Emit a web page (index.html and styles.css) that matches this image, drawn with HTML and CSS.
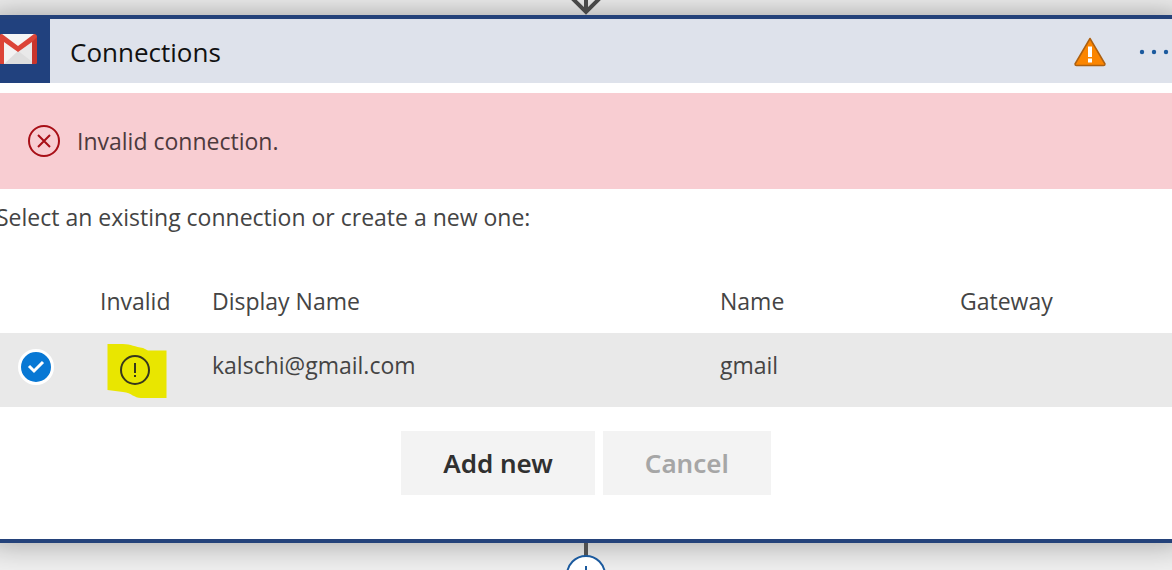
FILE: index.html
```html
<!DOCTYPE html>
<html lang="en">
<head>
<meta charset="utf-8">
<title>Connections</title>
<link rel="stylesheet" href="styles.css">
</head>
<body>
<main class="designer">
  <div class="connector-in">
    <svg width="32" height="15" viewBox="0 0 32 15" aria-hidden="true"><path d="M16 0v11M1-3l15 15L31-3" fill="none" stroke="#484848" stroke-width="4"/></svg>
  </div>
  <section class="card">
    <header class="card-header">
      <div class="logo-tile">
        <svg width="40" height="32" viewBox="0 0 40 32" role="img" aria-label="Gmail">
          <path d="M3 1h34v30H3z" fill="#e9e9e9"/>
          <path d="M3 31 19 17 37 31z" fill="#dedede"/>
          <path d="M6 31 20 18l-14-11z" fill="#f3f3f3"/>
          <path d="M4 1h32L20 14z" fill="#f5f5f5"/>
          <path d="M1 4Q1 1 4 1l16 12L36 1q3 0 3 3v25q0 2-2 2h-3V9L20 19 6 9v22H3q-2 0-2-2z" fill="#dc4437"/>
          <path d="M39 4v25q0 2-2 2h-3V9z" fill="#c9352c"/>
        </svg>
      </div>
      <h1 class="card-title">Connections</h1>
      <svg class="warning" width="32" height="30" viewBox="0 0 32 30" role="img" aria-label="Warning">
        <path d="M16 1.500 31 27q0 1.500-1.500 1.500h-27Q1 28.500 1 27z" fill="#fb8500" stroke="#ad6010" stroke-width="1.500" stroke-linejoin="round"/>
        <path d="M14 9.500h4V20h-4zM14 21.500h4v4h-4z" fill="#fff"/>
      </svg>
      <button class="more" type="button" aria-label="More">
        <svg width="30" height="6" viewBox="0 0 30 6" aria-hidden="true"><g fill="#1b5a9e"><circle cx="3" cy="3" r="2.200"/><circle cx="15" cy="3" r="2.200"/><circle cx="27" cy="3" r="2.200"/></g></svg>
      </button>
    </header>
    <div class="error" role="alert">
      <svg width="34" height="34" viewBox="0 0 34 34" fill="none" stroke="#a80f17" stroke-width="2" aria-hidden="true"><circle cx="17" cy="17" r="15"/><path d="m11 11 12 12M23 11 11 23"/></svg>
      <p class="error-text">Invalid connection.</p>
    </div>
    <p class="intro">Select an existing connection or create a new one:</p>
    <table class="connections">
      <thead>
        <tr><td class="col-pick"></td><th class="col-invalid" scope="col">Invalid</th><th class="col-display" scope="col">Display Name</th><th class="col-name" scope="col">Name</th><th scope="col">Gateway</th></tr>
      </thead>
      <tbody>
        <tr class="selected">
          <td>
            <label class="pick">
              <input type="radio" name="connection" aria-label="kalschi@gmail.com" checked>
              <svg width="18" height="14" viewBox="0 0 18 14" aria-hidden="true"><path d="m2 6 5 5 9-9" fill="none" stroke="#fff" stroke-width="3"/></svg>
            </label>
          </td>
          <td>
            <svg class="invalid-mark" width="60" height="54" viewBox="0 0 60 54" role="img" aria-label="Invalid">
              <path d="M.5 0H16c8 0 12 3 20 4l5 2.500h18.500V54H34c-7 0-9-5-18-6L.5 46z" fill="#e9e600"/>
              <circle cx="28" cy="26" r="14" fill="none" stroke="#37371c" stroke-width="2"/>
              <path d="M27 19h2v10h-2zM27 31h2v2h-2z" fill="#37371c"/>
            </svg>
          </td>
          <td>kalschi@gmail.com</td><td>gmail</td><td></td>
        </tr>
      </tbody>
    </table>
    <div class="actions">
      <button class="action" type="button">Add new</button>
      <button class="action" type="button" disabled>Cancel</button>
    </div>
  </section>
  <div class="connector-out">
    <svg width="40" height="52" viewBox="0 0 40 52" aria-hidden="true"><path d="M20 0v14" stroke="#505050" stroke-width="4"/><circle cx="20" cy="32" r="19" fill="#fff" stroke="#1b5a9e" stroke-width="2"/><path d="M20 23v18M11 32h18" stroke="#1b5a9e" stroke-width="2"/></svg>
  </div>
</main>
</body>
</html>
```
FILE: styles.css
```css
* {
  box-sizing: border-box;
}

body {
  margin: 0;
  height: 100vh;
  overflow: hidden;
  background: #f1f1f1;
  color: #444;
  font: 23px/32px "Open Sans", "Noto Sans", sans-serif;
}

h1,
p {
  margin: 0;
  font-weight: 400;
}

svg {
  display: block;
  flex: none;
}

.designer {
  margin: 0 -14px;
}

.connector-in,
.connector-out {
  display: flex;
  justify-content: center;
  position: relative;
  z-index: 1;
}

.card {
  background: #fff;
  border: solid #24427a;
  border-width: 4px 0;
  box-shadow: 0 0 32px rgba(0, 0, 0, 0.36);
}

.card-header {
  display: flex;
  align-items: center;
  min-height: 64px;
  padding: 2px 16px 0 0;
  background: #dee2eb;
}

.logo-tile {
  display: grid;
  place-items: center;
  align-self: stretch;
  width: 64px;
  margin-top: -2px;
  padding-bottom: 4px;
  background: #21417e;
}

.card-title {
  flex: 1;
  padding-left: 20px;
  color: #111;
  font-size: 26px;
}

.warning {
  margin-right: 32px;
}

.more {
  padding: 8px 1px;
  border: 0;
  background: none;
}

.error {
  display: flex;
  align-items: center;
  gap: 16px;
  margin-top: 10px;
  padding: 31px 41px;
  background: #f8cdd2;
}

.error-text {
  color: #4d3a3d;
}

.intro {
  padding: 12px 10px 36px;
}

.connections {
  width: 100%;
  border-collapse: collapse;
  table-layout: fixed;
}

.connections th,
.connections td {
  padding: 0;
  font-weight: 400;
  text-align: left;
}

.connections thead {
  height: 64px;
}

.connections .col-pick {
  width: 114px;
}

.connections .col-invalid {
  width: 112px;
}

.connections .col-display {
  width: 508px;
}

.connections .col-name {
  width: 240px;
}

.connections .selected {
  height: 74px;
  background: #e9e9e9;
}

.connections .selected td {
  padding-bottom: 10px;
}

.connections .selected td:first-child {
  padding: 0 0 6px 32px;
}

.connections .selected td:nth-child(2) {
  padding: 2px 0 0 7px;
}

.pick {
  display: grid;
  place-items: center;
  width: 36px;
}

.pick input,
.pick svg {
  grid-area: 1 / 1;
}

.pick input {
  appearance: none;
  width: 36px;
  height: 36px;
  margin: 0;
  border: 3px solid #fff;
  border-radius: 50%;
  background: #0878d4;
}

.pick svg {
  z-index: 1;
  pointer-events: none;
}

.actions {
  display: flex;
  justify-content: center;
  gap: 8px;
  padding: 24px 0 44px;
}

.action {
  height: 64px;
  padding: 0 42px;
  border: 0;
  background: #f3f3f3;
  color: #303030;
  font: 600 26px/32px "Noto Sans", "Open Sans", sans-serif;
}

.action:disabled {
  color: #a6a6a6;
}
```
